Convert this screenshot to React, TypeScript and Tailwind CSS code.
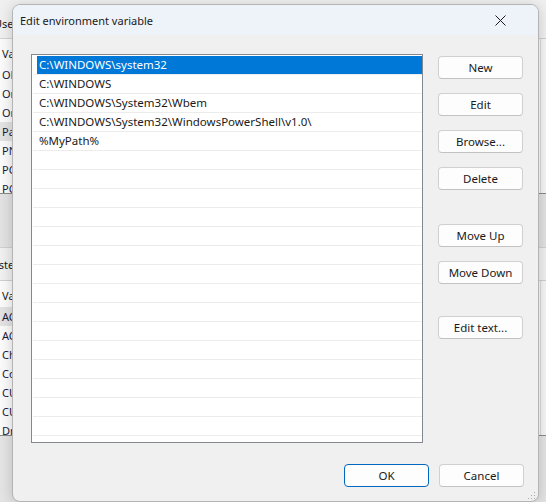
import React from "react";

const userVars = ["OLLAMA_MODELS", "OneDrive", "OneDriveConsumer", "Path", "PNPM_HOME", "PC_HOME", "PCLOUD"];
const sysVars = ["ACSetupSvcPort", "ACSvcPort", "ChocolateyInstall", "ComSpec", "CUDA_PATH", "CUDA_PATH_V12", "DriverData"];

const paths = [
  "C:\\WINDOWS\\system32",
  "C:\\WINDOWS",
  "C:\\WINDOWS\\System32\\Wbem",
  "C:\\WINDOWS\\System32\\WindowsPowerShell\\v1.0\\",
  "%MyPath%",
];

function BgList({ items, selected, labels }: { items: string[]; selected: number; labels: boolean }) {
  return (
    <div className="flex flex-col">
      <div className="h-[20px] mt-[4px] flex items-center pl-[2px] text-[#1a1a1a]">{labels ? "Variable" : ""}</div>
      <div className="mt-[2px] flex flex-col">
        {items.map((t, i) => (
          <div
            key={t}
            className={`h-[19px] shrink-0 flex items-center pl-[2px] text-[#1a1a40] ${i === selected && labels ? "bg-[#e3e3e3]" : ""}`}
          >
            {labels ? t : ""}
          </div>
        ))}
      </div>
    </div>
  );
}

// One vertical slice of the Environment Variables window that sits behind the dialog
function BgColumn({ labels }: { labels: boolean }) {
  return (
    <div className="flex flex-col h-full w-full">
      <div className="h-[39px] shrink-0 bg-[#f0f0f0] border-b border-[#d2d2d2] flex items-center whitespace-nowrap">
        {labels && <span className="ml-[-6px] mt-[9px] text-[#1a1a1a]">User variables for Admin</span>}
      </div>
      <div className="h-[155px] shrink-0 bg-[#fbfbfb] border-b border-[#8a8a8a] overflow-hidden whitespace-nowrap flex">
        <div className="flex-1">
          <BgList items={userVars} selected={3} labels={labels} />
        </div>
        {!labels && <div className="w-[6px] h-full border-l border-[#dcdcdc] bg-[#f5f5f5]" />}
      </div>
      <div className="h-[54px] shrink-0 bg-[#e2e2e2] border-b border-[#d0d0d0]" />
      <div className="h-[33px] shrink-0 bg-[#f0f0f0] border-b border-[#cfcfcf] flex items-center whitespace-nowrap">
        {labels && <span className="ml-[-13px] mt-[1px] text-[#1a1a1a]">System variables</span>}
      </div>
      <div className="h-[155px] shrink-0 bg-[#fbfbfb] border-b border-[#8a8a8a] overflow-hidden whitespace-nowrap flex">
        <div className="flex-1">
          <BgList items={sysVars} selected={0} labels={labels} />
        </div>
        {!labels && <div className="w-[6px] h-full border-l border-[#dcdcdc] bg-[#f5f5f5]" />}
      </div>
      <div className="flex-1 bg-[#e4e4e4]" />
    </div>
  );
}

function Btn({ children, primary }: { children: React.ReactNode; primary?: boolean }) {
  return (
    <div
      className={`w-[85px] h-[23px] shrink-0 flex items-center justify-center rounded-[4px] bg-[#fdfdfd] text-[#1a1a1a] text-[11.5px] border ${
        primary ? "border-[#0067c0]" : "border-[#d0d0d0] border-b-[#c2c2c2]"
      }`}
    >
      {children}
    </div>
  );
}

export default function App() {
  const rows = Array.from({ length: 20 }, (_, i) => paths[i] ?? "");
  return (
    <div className="relative w-[546px] h-[502px] overflow-hidden bg-[#f0f0f0] font-['Noto_Sans',sans-serif] text-[11px] leading-none">
      {/* Environment Variables window underneath */}
      <div className="flex w-full h-full">
        <div className="w-[12px] h-full overflow-hidden shrink-0">
          <BgColumn labels />
        </div>
        <div className="flex-1 h-full">
          <BgColumn labels={false} />
        </div>
      </div>

      {/* Edit environment variable dialog */}
      <div className="absolute left-[12px] top-[4px] w-[527px] h-[498px] rounded-[8px] border border-[#b4b4b4] bg-[#f0f0f0] overflow-hidden shadow-[0_2px_14px_rgba(0,0,0,0.18)] flex flex-col">
        <div className="h-[30px] shrink-0 bg-[#eef3f9] flex items-center justify-between pl-[7px] pr-[32px]">
          <span className="text-[#1a1a1a] text-[11px] mt-[1px]">Edit environment variable</span>
          <svg width="11" height="11" viewBox="0 0 11 11" className="mt-[1px]">
            <path d="M0.5 0.5 L10.5 10.5 M10.5 0.5 L0.5 10.5" stroke="#1a1a1a" strokeWidth="1" fill="none" />
          </svg>
        </div>

        <div className="flex pl-[18px] pt-[19px]">
          <div className="w-[392px] h-[389px] shrink-0 border border-[#848890] bg-white pt-[1px] pl-[1px] overflow-hidden text-[11.5px]">
            {rows.map((t, i) => (
              <div key={i} className="h-[19px] border-b border-[#ececec] flex">
                {i === 0 ? (
                  <div className="ml-[4px] flex-1 h-[18px] bg-[#0078d7] text-white flex items-center pl-[2px]">{t}</div>
                ) : (
                  <div className="pl-[6px] h-[18px] flex items-center text-[#1a1a1a] whitespace-nowrap">{t}</div>
                )}
              </div>
            ))}
          </div>

          <div className="ml-[15px] mt-[2px] flex flex-col">
            <div className="flex flex-col gap-[14px]">
              <Btn>New</Btn>
              <Btn>Edit</Btn>
              <Btn>Browse...</Btn>
              <Btn>Delete</Btn>
            </div>
            <div className="mt-[34px] flex flex-col gap-[14px]">
              <Btn>Move Up</Btn>
              <Btn>Move Down</Btn>
            </div>
            <div className="mt-[32px]">
              <Btn>Edit text...</Btn>
            </div>
          </div>
        </div>

        <div className="flex justify-end gap-[10px] pr-[14px] mt-[21px]">
          <Btn primary>OK</Btn>
          <Btn>Cancel</Btn>
        </div>

        {/* resize grip */}
        <svg width="8" height="8" viewBox="0 0 8 8" className="absolute right-[2px] bottom-[1px]">
          <rect x="6" y="0" width="1" height="1" fill="#a8a8a8" />
          <rect x="3" y="3" width="1" height="1" fill="#a8a8a8" />
          <rect x="6" y="3" width="1" height="1" fill="#a8a8a8" />
          <rect x="0" y="6" width="1" height="1" fill="#a8a8a8" />
          <rect x="3" y="6" width="1" height="1" fill="#a8a8a8" />
          <rect x="6" y="6" width="1" height="1" fill="#a8a8a8" />
        </svg>
      </div>
    </div>
  );
}
